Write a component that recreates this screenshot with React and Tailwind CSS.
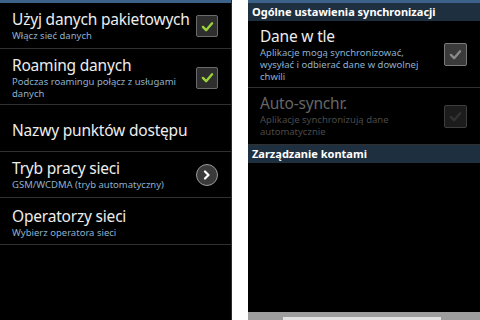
import React from 'react';

const font = { fontFamily: '"Noto Sans", "Open Sans", sans-serif' };

const Check = ({ tone = 'on' }) => {
    const box = {
        on: 'w-[22px] h-[22px] bg-[#2e2e2e] border-[#6b6b6b]',
        gray: 'w-[23px] h-[23px] bg-[#3a3a3a] border-[#7a7a7a]',
        off: 'w-[23px] h-[23px] bg-[#1c1c1c] border-[#3e3e3e]',
    }[tone];
    const stroke = { on: '#9ad23a', gray: '#8a8a8a', off: '#333333' }[tone];
    return (
        <div className={`rounded-[2px] border ${box} flex items-center justify-center shrink-0`}>
            <svg width="13" height="11" viewBox="0 0 14 12">
                <path d="M2 6.5 L5.5 10 L12 2.5" fill="none" stroke={stroke} strokeWidth="2.6" strokeLinecap="round" strokeLinejoin="round" />
            </svg>
        </div>
    );
};

const Chevron = () => (
    <div className="w-[22px] h-[22px] rounded-full bg-[#3a3a3a] border border-[#9a9a9a] flex items-center justify-center shrink-0">
        <svg width="8" height="10" viewBox="0 0 8 10">
            <path d="M2 1.5 L5.5 5 L2 8.5" fill="none" stroke="#ffffff" strokeWidth="2.2" strokeLinecap="round" strokeLinejoin="round" />
        </svg>
    </div>
);

const Row = ({ title, sub, right, h, dim, pt = '' }) => (
    <div className={`${h} ${pt} flex items-center pl-[12px] pr-[13px] border-b border-[#303030]`}>
        <div className="flex-1 min-w-0">
            <div className={`text-[15.5px] leading-[18px] tracking-[-0.2px] whitespace-nowrap ${dim ? 'text-[#666666]' : 'text-[#ededed]'}`}>{title}</div>
            {sub && (
                <div className={`text-[9.5px] leading-[12px] mt-[2px] pr-[8px] ${dim ? 'text-[#4a4a4a]' : 'text-[#8fb0cc]'}`}>{sub}</div>
            )}
        </div>
        {right}
    </div>
);

const Header = ({ children, h }) => (
    <div className={`${h} bg-[#1e2f3f] px-[4px] flex items-center text-[11px] font-bold text-white`}>{children}</div>
);

const App = () => {
    return (
        <div className="w-[480px] h-[320px] bg-white flex overflow-hidden" style={font}>
            {/* lewy panel: ustawienia sieci komórkowej */}
            <div className="w-[232px] h-full bg-black border-r border-[#2c2c2c] flex flex-col">
                <div className="h-[3px] bg-[#3d6289]" />
                <Row h="h-[46px]" pt="pt-[1px]" title="Użyj danych pakietowych" sub="Włącz sieć danych" right={<Check />} />
                <Row h="h-[56px]" pt="pt-[2px]" title="Roaming danych" sub="Podczas roamingu połącz z usługami danych" right={<Check />} />
                <Row h="h-[47px]" pt="pt-[3px]" title="Nazwy punktów dostępu" />
                <Row h="h-[46px]" pt="pt-[1px]" title="Tryb pracy sieci" sub="GSM/WCDMA (tryb automatyczny)" right={<Chevron />} />
                <Row h="h-[47px]" pt="pt-[3px]" title="Operatorzy sieci" sub="Wybierz operatora sieci" />
            </div>

            <div className="w-[16px] h-full bg-white" />

            {/* prawy panel: synchronizacja */}
            <div className="w-[232px] h-full bg-black flex flex-col">
                <div className="h-[3px] bg-[#3d6289]" />
                <Header h="h-[18px]">Ogólne ustawienia synchronizacji</Header>
                <Row h="h-[67px]" pt="pt-[1px]" title="Dane w tle" sub="Aplikacje mogą synchronizować, wysyłać i odbierać dane w dowolnej chwili" right={<Check tone="gray" />} />
                <Row h="h-[57px]" dim title="Auto-synchr." sub="Aplikacje synchronizują dane automatycznie" right={<Check tone="off" />} />
                <Header h="h-[18px]">Zarządzanie kontami</Header>
                <div className="flex-1" />
                <div className="h-[8px] bg-[#9e9e9e] flex pl-[35px] pt-[5px]">
                    <div className="w-[158px] h-full bg-[#e2e2e2]" />
                </div>
            </div>
        </div>
    );
};

export default App;
